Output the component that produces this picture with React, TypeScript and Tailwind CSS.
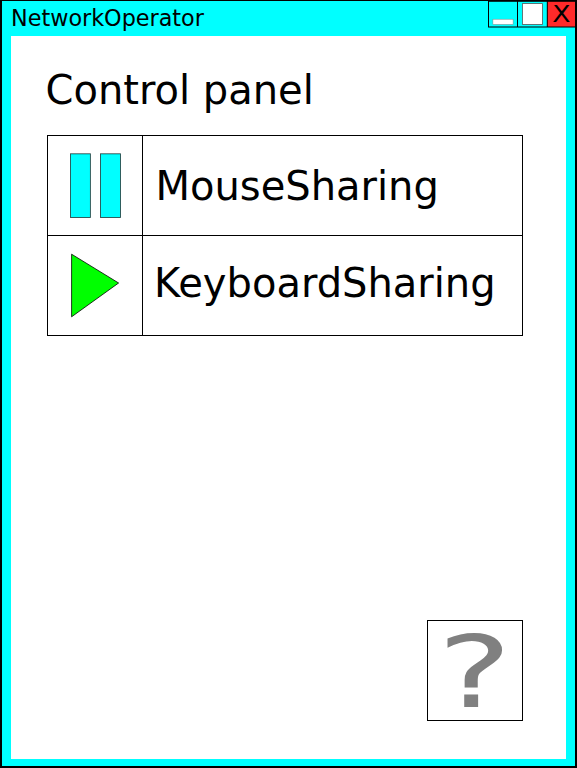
import React from "react";

type RowProps = {
  icon: React.ReactNode;
  label: string;
  className: string;
};

function PauseIcon() {
  return (
    <svg className="block h-[99px] w-[94px]" viewBox="48 136 94 99" fill="#00ffff" stroke="#000" strokeOpacity="0.7" strokeWidth="0.9">
      <rect x="70.5" y="153.8" width="19.9" height="63.7" />
      <rect x="100.5" y="153.8" width="20" height="63.7" />
    </svg>
  );
}

function PlayIcon() {
  return (
    <svg className="block h-[99px] w-[94px]" viewBox="48 236 94 99" fill="#00ff00" stroke="#000" strokeWidth="0.8">
      <path d="M71.6 254.2 L118.6 283 L71.6 316.8 Z" />
    </svg>
  );
}

function Row({ icon, label, className }: RowProps) {
  return (
    <div className="flex h-[100px] border-b border-black">
      <div className="w-[95px] shrink-0 border-r border-black">{icon}</div>
      <div className={"whitespace-nowrap text-[40px] leading-[40px] " + className}>{label}</div>
    </div>
  );
}

export default function App() {
  return (
    <div className="flex h-[768px] w-[577px] flex-col border-2 border-t-1 border-black bg-[#00ffff] font-['DejaVu_Sans',sans-serif] text-black">
      <header className="flex h-[35px] shrink-0 justify-between pl-[9px]">
        <h1 className="pt-[5px] text-[22.3px] leading-[24px]">NetworkOperator</h1>
        <svg className="block h-[27px] w-[88px] overflow-visible" viewBox="487 1 88 27">
          <rect x="547" y="1" width="28" height="26" fill="#ff2a2a" />
          <path d="M488.5 1V27M517.5 1V27M547.3 1V27M488 27H575M488 1.3H575" fill="none" stroke="#000" strokeWidth="1" />
          <rect x="492.9" y="19.2" width="20.2" height="5.2" fill="#fff" stroke="#808080" strokeWidth="0.5" />
          <rect x="522.4" y="3.6" width="20" height="20.8" fill="#fff" stroke="#555" strokeWidth="0.8" />
          <text transform="translate(552.2 22.3) scale(1.12 1)" fontSize="23.8" fontFamily="DejaVu Sans">X</text>
        </svg>
      </header>
      <main className="mx-[9px] mb-[7px] flex flex-1 flex-col bg-white px-[36px] pr-[43px] pb-[38px]">
        <h2 className="-ml-[1.5px] mt-[34px] h-[65px] whitespace-nowrap text-[40px] leading-[40px]">Control panel</h2>
        <section className="w-[476px] border-x border-t border-black">
          <Row icon={<PauseIcon />} label="MouseSharing" className="pt-[30px] pl-[12.5px]" />
          <Row icon={<PlayIcon />} label="KeyboardSharing" className="pt-[27px] pl-[11px]" />
        </section>
        <button className="mt-auto flex h-[101px] w-[96px] items-center justify-center self-end border border-black pt-[5px] text-[#808080]">
          <span className="inline-block scale-x-[1.4] text-[100px] leading-[100px]">?</span>
        </button>
      </main>
    </div>
  );
}
